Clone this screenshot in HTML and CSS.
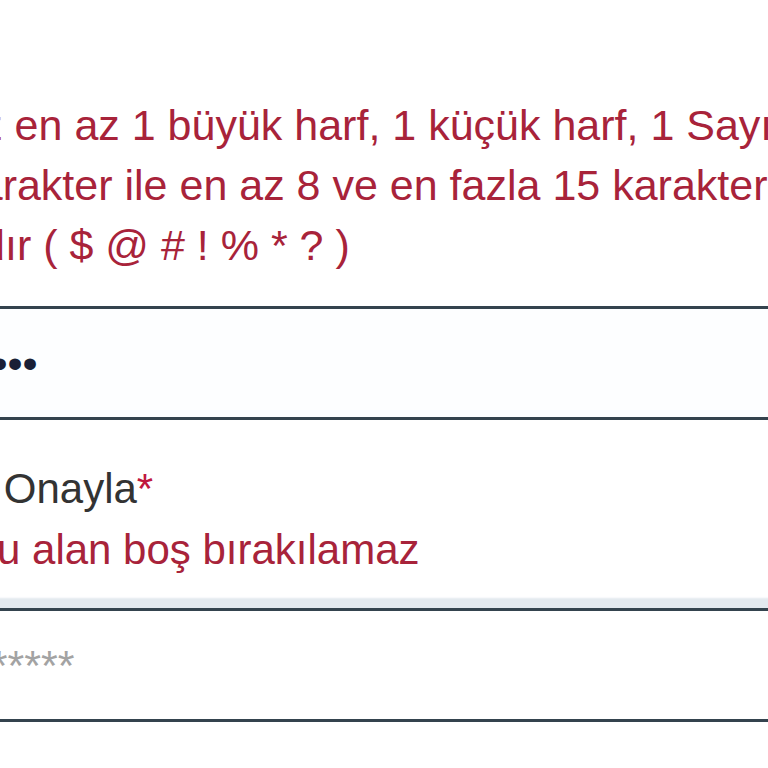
FILE: index.html
```html
<!DOCTYPE html>
<html lang="tr">
<head>
  <meta charset="UTF-8">
  <meta name="viewport" content="width=device-width, initial-scale=1.0">
  <title>Parola</title>
  <link rel="stylesheet" href="styles.css">
</head>
<body>
  <div class="form">
    <p class="field-error field-error--rules">Parolanız en az 1 büyük harf, 1 küçük harf, 1 Sayı ve 1 Özel karakter ile en az 8 ve en fazla 15 karakterden oluşmalıdır ( $ @ # ! % * ? )</p>
    <input class="form-input form-input--filled" type="password" value="parola123456" aria-label="Parola">

    <label class="form-label" for="confirm">Parolayı Onayla<span class="required">*</span></label>
    <p class="field-error field-error--short">Bu alan boş bırakılamaz</p>
    <input class="form-input form-input--focus" id="confirm" type="password" placeholder="*************">
  </div>
</body>
</html>
```

FILE: styles.css
```css
html, body {
  margin: 0;
  overflow: hidden;
  background-color: #fff;
}

body {
  font-family: "Liberation Sans", Arial, sans-serif;
  font-size: 43px;
}

.form {
  width: 1030px;
  margin-left: -179px;
  padding-top: 95px;
}

.field-error {
  margin: 0;
  color: #a8233a;
  line-height: 60px;
}

.field-error--short {
  padding-left: 148px;
  font-size: 42px;
}

.form-label {
  display: block;
  margin-top: 38px;
  padding-left: 17px;
  color: #333;
  font-size: 42px;
  line-height: 62px;
}

.required {
  color: #c0183e;
}

.form-input {
  display: block;
  box-sizing: border-box;
  width: 100%;
  height: 114px;
  padding: 0 33px;
  border: 3px solid #34434e;
  border-radius: 4px;
  background-color: #fff;
  color: #1a1f36;
  font-family: "Liberation Sans", Arial, sans-serif;
  font-size: 43px;
  outline: none;
}

.form-input--filled {
  margin-top: 31px;
  background-color: #fdfeff;
}

.form-input--focus {
  margin-top: 28px;
  box-shadow: 0 0 2px 10px #e3e9ef;
}

.form-input::placeholder {
  color: #a3a3a3;
}
```
